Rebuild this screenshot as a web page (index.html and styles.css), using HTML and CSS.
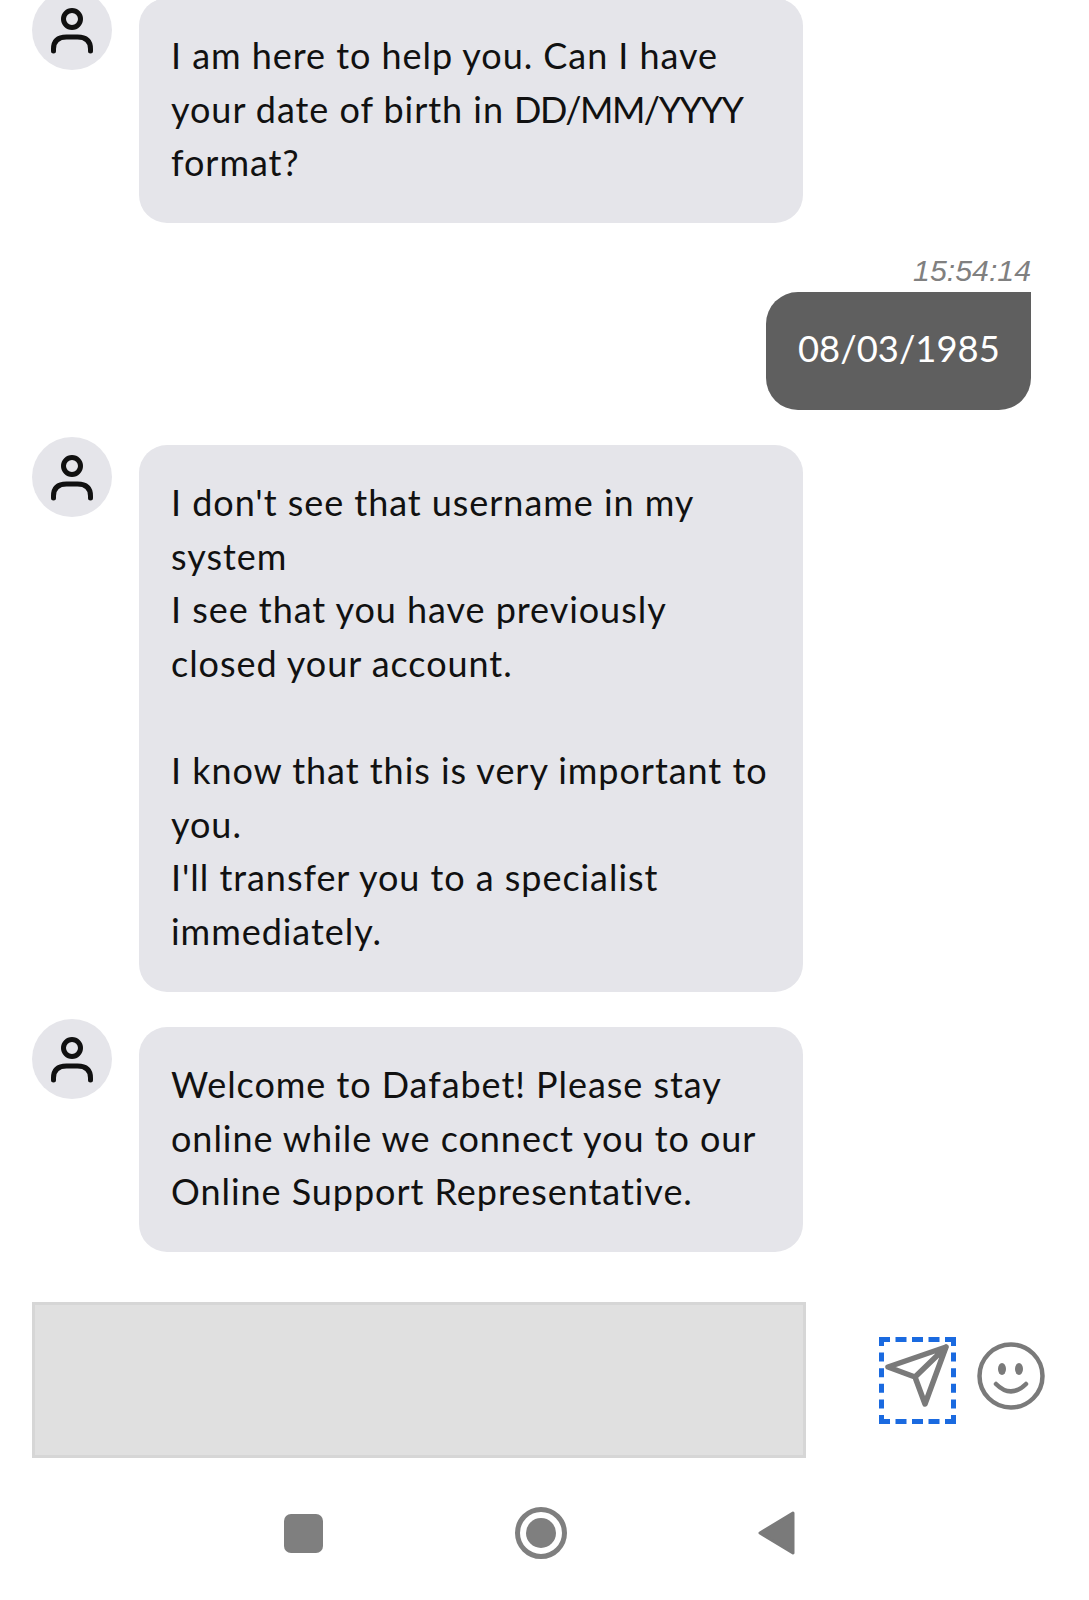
FILE: index.html
```html
<!DOCTYPE html>
<html lang="en">
<head>
    <meta charset="UTF-8">
    <meta name="viewport" content="width=device-width, initial-scale=1.0">
    <title>Chat</title>
    <link rel="stylesheet" href="styles.css">
</head>
<body>
    <div class="chat">
        <div class="msg">
            <div class="avatar">
                <svg viewBox="0 0 80 80" width="80" height="80"><circle cx="40" cy="29" r="8.5" class="ico"/><path d="M21.5 61v-2q0-12 13-12h11q13 0 13 12v2" class="ico"/></svg>
            </div>
            <div class="bubble">I am here to help you. Can I have<br>your date of birth in <span class="caps">DD/MM/YYYY</span><br>format?</div>
        </div>

        <div class="mine">
            <div class="time">15:54:14</div>
            <div class="bubble-mine">08/03/1985</div>
        </div>

        <div class="msg">
            <div class="avatar">
                <svg viewBox="0 0 80 80" width="80" height="80"><circle cx="40" cy="29" r="8.5" class="ico"/><path d="M21.5 61v-2q0-12 13-12h11q13 0 13 12v2" class="ico"/></svg>
            </div>
            <div class="bubble">I don't see that username in my<br>system<br>I see that you have previously<br>closed your account.<br><br>I know that this is very important to<br>you.<br>I'll transfer you to a specialist<br>immediately.</div>
        </div>

        <div class="msg">
            <div class="avatar">
                <svg viewBox="0 0 80 80" width="80" height="80"><circle cx="40" cy="29" r="8.5" class="ico"/><path d="M21.5 61v-2q0-12 13-12h11q13 0 13 12v2" class="ico"/></svg>
            </div>
            <div class="bubble">Welcome to Dafabet! Please stay<br>online while we connect you to our<br>Online Support Representative.</div>
        </div>
    </div>

    <div class="composer">
        <div class="input"></div>
        <div class="send">
            <svg viewBox="0 0 77 87" width="77" height="87">
                <path d="M0 2.5H77M0 84.5H77" class="dash-h"/>
                <path d="M2.5 0V87M74.5 0V87" class="dash-v"/>
                <path d="M67 10L9 30L36 40L46 67ZM36 40L67 10" class="ico-grey"/>
            </svg>
        </div>
        <div class="smile">
            <svg viewBox="0 0 68 68" width="68" height="68"><circle cx="34" cy="34" r="31.5" class="ico-thin"/><ellipse cx="25" cy="27" rx="4" ry="6" class="dot"/><ellipse cx="42" cy="27" rx="4" ry="6" class="dot"/><path d="M19 42q15 15 30 0" class="ico-thin"/></svg>
        </div>
    </div>

    <div class="navbar">
        <div class="nav-square"></div>
        <div class="nav-home"><div class="nav-home-dot"></div></div>
        <svg class="nav-back" viewBox="0 0 37 44" width="37" height="44"><path d="M35 2L2 22L35 42Z" class="dot tri"/></svg>
    </div>
</body>
</html>
```

FILE: styles.css
```css
html, body {
    margin: 0;
    padding: 0;
    background: #fff;
}
body {
    height: 1600px;
    overflow: hidden;
    font-family: Lato, "Open Sans", sans-serif;
}
.chat {
    margin-top: -10px;
    padding: 0 58px 0 32px;
}
.msg {
    display: flex;
    gap: 27px;
    margin-bottom: 27px;
}
.avatar {
    width: 80px;
    height: 80px;
    flex: none;
    border-radius: 50%;
    background: #e5e5ea;
}
.avatar svg {
    display: block;
}
.ico {
    fill: none;
    stroke: #111;
    stroke-width: 5;
    stroke-linecap: round;
}
.bubble {
    width: 600px;
    margin-top: 8px;
    padding: 31px 32px 33.5px;
    border-radius: 28px;
    background: #e5e5ea;
    color: #111;
    font-size: 36px;
    letter-spacing: 0.95px;
    line-height: 53.6px;
    white-space: nowrap;
}
.caps {
    letter-spacing: -1.55px;
}
.mine {
    display: flex;
    flex-direction: column;
    align-items: flex-end;
    margin-bottom: 27px;
}
.time {
    height: 37px;
    margin-top: 5px;
    color: #808080;
    font-family: "Liberation Sans", Arial, sans-serif;
    font-style: italic;
    font-size: 30.3px;
    line-height: 31px;
}
.bubble-mine {
    width: 201px;
    height: 54px;
    padding: 29px 32px 35px;
    border-radius: 32px 0 32px 32px;
    background: #5f5f5f;
    color: #fff;
    font-size: 36.4px;
    line-height: 54px;
    text-align: center;
    white-space: nowrap;
}
.composer {
    display: flex;
    align-items: flex-start;
    margin-top: 50px;
    padding-left: 32px;
}
.input {
    width: 768px;
    height: 150px;
    border: 3px solid #d6d6d6;
    background: #e0e0e0;
}
.send {
    width: 77px;
    height: 87px;
    margin: 35px 0 0 73px;
}
.send svg {
    display: block;
}
.dash-h, .dash-v {
    fill: none;
    stroke: #1a6ae0;
    stroke-width: 5;
}
.dash-h {
    stroke-dasharray: 11 5.5;
}
.dash-v {
    stroke-dasharray: 9 6.6;
}
.ico-grey {
    fill: none;
    stroke: #7a7a7a;
    stroke-width: 5.5;
    stroke-linejoin: round;
    stroke-linecap: round;
}
.smile {
    margin: 40px 0 0 21px;
}
.smile svg {
    display: block;
}
.ico-thin {
    fill: none;
    stroke: #7a7a7a;
    stroke-width: 4.5;
    stroke-linecap: round;
}
.dot {
    fill: #7a7a7a;
}
.tri {
    stroke: #7a7a7a;
    stroke-width: 3;
    stroke-linejoin: round;
}
.navbar {
    display: flex;
    align-items: center;
    margin-top: 49px;
    padding-left: 284px;
}
.nav-square {
    width: 39px;
    height: 39px;
    border-radius: 7px;
    background: #7f7f7f;
}
.nav-home {
    display: flex;
    align-items: center;
    justify-content: center;
    box-sizing: border-box;
    width: 52px;
    height: 52px;
    margin-left: 192px;
    border: 5px solid #7f7f7f;
    border-radius: 50%;
}
.nav-home-dot {
    width: 30px;
    height: 30px;
    border-radius: 50%;
    background: #7f7f7f;
}
.nav-back {
    margin-left: 191px;
}
```
